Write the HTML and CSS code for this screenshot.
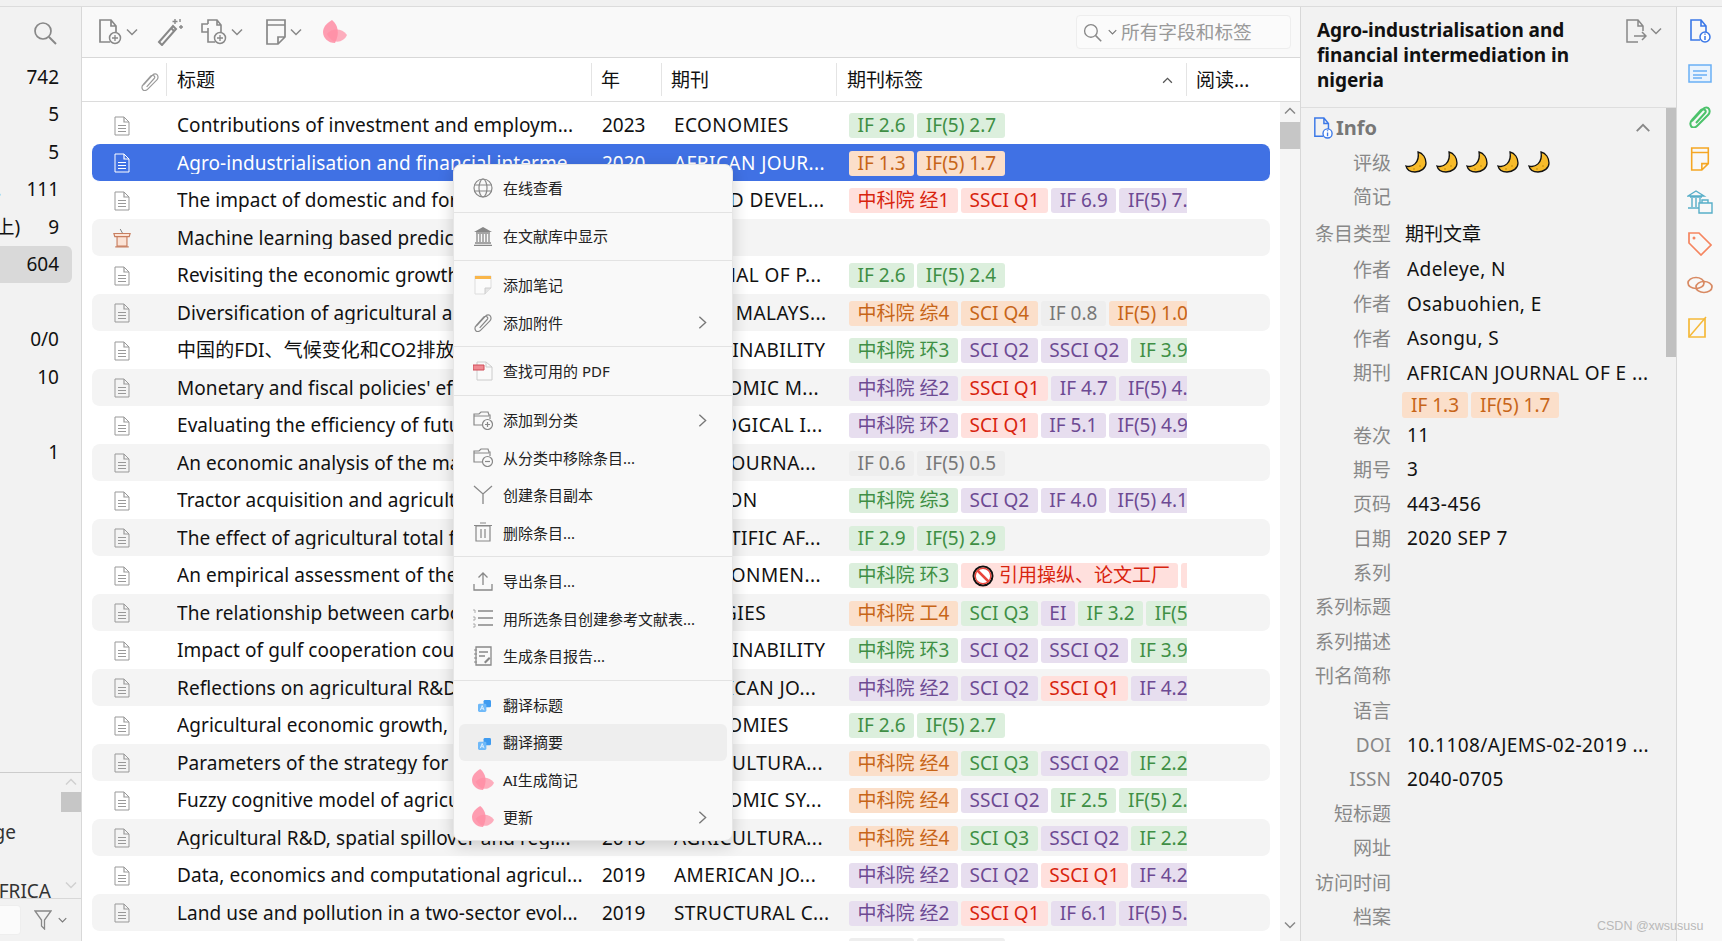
FILE: index.html
```html
<!DOCTYPE html>
<html lang="zh">
<head>
<meta charset="utf-8">
<title>Zotero</title>
<link rel="stylesheet" href="styles.css">
</head>
<body>
<svg class="defs" aria-hidden="true">
  <symbol id="doc" viewBox="0 0 16 20"><path d="M1 1h9l5 5v13H1z" fill="none" stroke="currentColor" stroke-width="1"/><path d="M10 1v5h5M4 9.5h8M4 12.5h8M4 15.5h8" fill="none" stroke="currentColor" stroke-width="1.2"/></symbol>
  <symbol id="podium" viewBox="0 0 20 22"><path d="M1 6h18l-1 3.500H2z" fill="#fbe3d6" stroke="#c87e5f" stroke-width="1.300"/><path d="M4.500 9.500h11V20h-11z" fill="#fbe3d6" stroke="#c87e5f" stroke-width="1.300"/><path d="M2.500 20.800h15" stroke="#c87e5f" stroke-width="1.300"/><path d="M8 1l2.500 4.500" stroke="#777"/></symbol>
  <symbol id="search" viewBox="0 0 24 24"><circle cx="10" cy="10" r="8" fill="none" stroke="currentColor" stroke-width="1.700"/><path d="M16 16l7 7" stroke="currentColor" stroke-width="2"/></symbol>
  <symbol id="chev" viewBox="0 0 12 8"><path d="M1 1.500l5 5 5-5" fill="none" stroke="currentColor" stroke-width="1.500"/></symbol>
  <symbol id="newitem" viewBox="0 0 24 26"><path d="M12 23H2V1h11l5 6v6M13 1v6h5" fill="none" stroke="currentColor" stroke-width="1.700"/><circle cx="17" cy="19" r="5.500" fill="none" stroke="currentColor" stroke-width="1.500"/><path d="M14 19h6M17 16v6" stroke="currentColor" stroke-width="1.300"/></symbol>
  <symbol id="wand" viewBox="0 0 26 28"><path d="M2 24l3 3L19 11l-3-3z" fill="none" stroke="currentColor" stroke-width="2"/><path d="M14 10l3 3" stroke="currentColor" stroke-width="2"/><path d="M18 1v5M15.500 3.500h5M24 7v4M22 9h4M23 1v3" stroke="currentColor" stroke-width="1.400"/></symbol>
  <symbol id="addatt" viewBox="0 0 26 26"><path d="M7 5V1h9l4 5v8M16 1v5h4M7 5H1v8h6M7 9v14h7" fill="none" stroke="currentColor" stroke-width="1.600"/><circle cx="19" cy="19" r="5.500" fill="none" stroke="currentColor" stroke-width="1.500"/><path d="M16 19h6M19 16v6" stroke="currentColor" stroke-width="1.300"/></symbol>
  <symbol id="note" viewBox="0 0 20 26"><path d="M1 1h18v17l-7 7H1zM19 18h-7v7M1 6h18" fill="none" stroke="currentColor" stroke-width="1.700"/></symbol>
  <symbol id="flower" viewBox="0 0 24 24"><path d="M9 0c6 5 8 13 3 23C5 23 0 18 0 12 0 7 4 3 9 0z" fill="#ff8da4" opacity=".85"/><path d="M4 14c5-6 15-6 20 1-3 7-14 11-20-1z" fill="#ff8da4" opacity=".7"/></symbol>
  <symbol id="clip" viewBox="0 0 24 24"><path d="M4 17L15 5c2-2 5-2 6 0s1 4-1 6L9 22c-2 2-5 2-6 0s-1-4 1-6l9-10c1-1 3-1 4 0s1 2 0 3L8 19" fill="none" stroke="currentColor" stroke-width="1.400"/></symbol>
  <symbol id="clipb" viewBox="0 0 24 24"><path d="M4 17L15 5c2-2 5-2 6 0s1 4-1 6L9 22c-2 2-5 2-6 0s-1-4 1-6l9-10c1-1 3-1 4 0s1 2 0 3L8 19" fill="none" stroke="currentColor" stroke-width="2"/></symbol>
  <symbol id="globe" viewBox="0 0 20 20"><circle cx="10" cy="10" r="9" fill="none" stroke="#888" stroke-width="1.200"/><ellipse cx="10" cy="10" rx="4" ry="9" fill="none" stroke="#888" stroke-width="1.200"/><path d="M1 7h18M1 13h18" stroke="#888" stroke-width="1.200"/></symbol>
  <symbol id="bank" viewBox="0 0 20 20"><path d="M1 6l9-5 9 5z" fill="#888"/><path d="M3 7h14M4 8v8M7 8v8M10 8v8M13 8v8M16 8v8M2 17h16M1 19.500h18" stroke="#888" stroke-width="1.300"/></symbol>
  <symbol id="mnote" viewBox="0 0 18 20"><path d="M1 1h16v12l-6 6H1z" fill="#fbfbfb" stroke="#ddd"/><path d="M1 1h16v3H1z" fill="#f9b64a"/><path d="M17 13h-6v6" fill="#e5e5e5" stroke="#ccc"/></symbol>
  <symbol id="mpdf" viewBox="0 0 20 20"><path d="M4 1h9l6 5v13H4z" fill="#fafafa" stroke="#ccc"/><path d="M13 1v5h6" fill="none" stroke="#ccc"/><path d="M0 4h11v5H0z" fill="#f08a92" stroke="#cf4d59"/></symbol>
  <symbol id="coll" viewBox="0 0 20 20"><path d="M10 15H1V4h5l2-2h7l1 3h1v4M1 6h15" fill="none" stroke="#888" stroke-width="1.200"/><circle cx="14.500" cy="14.500" r="5" fill="#f9f9f9" stroke="#888" stroke-width="1.200"/><path d="M12 14.500h5" stroke="#888" stroke-width="1.200"/></symbol>
  <symbol id="collplus" viewBox="0 0 20 20"><path d="M10 15H1V4h5l2-2h7l1 3h1v4M1 6h15" fill="none" stroke="#888" stroke-width="1.200"/><circle cx="14.500" cy="14.500" r="5" fill="#f9f9f9" stroke="#888" stroke-width="1.200"/><path d="M12 14.500h5M14.500 12v5" stroke="#888" stroke-width="1.200"/></symbol>
  <symbol id="dup" viewBox="0 0 20 20"><path d="M1 1l9 8 9-8M10 9v10" fill="none" stroke="#888" stroke-width="1.300"/></symbol>
  <symbol id="trash" viewBox="0 0 20 20"><path d="M3 4h14v15H3zM1 3.500h18M7 1h6M8 7v9M12 7v9" fill="none" stroke="#888" stroke-width="1.200"/></symbol>
  <symbol id="export" viewBox="0 0 20 20"><path d="M1 13v6h18v-6M10 2v12M5.500 6.500L10 2l4.500 4.500" fill="none" stroke="#888" stroke-width="1.300"/></symbol>
  <symbol id="biblio" viewBox="0 0 20 20"><path d="M5 3h15M5 10h15M5 17h15" stroke="#888" stroke-width="1.300"/><path d="M0 2h2v3M0 9h2v3H0M0 16h2v3H0" fill="none" stroke="#999" stroke-width=".8"/></symbol>
  <symbol id="report" viewBox="0 0 20 20"><path d="M3 1h15v18H3zM6 6h9M6 10h6" fill="none" stroke="#888" stroke-width="1.300"/><path d="M1 4h3M1 8h3M1 12h3M1 16h3" stroke="#888"/><path d="M11 16l5-5 1.500 1.500-5 5z" fill="#888"/></symbol>
  <symbol id="trans" viewBox="0 0 14 14"><rect x="6" y="1" width="8" height="8" rx="1.500" fill="#3f9bf0"/><rect x="0" y="5" width="9" height="9" rx="1.500" fill="#6fb9f8"/><path d="M2.500 12l2-5 2 5M3.500 10.500h2" fill="none" stroke="#fff" stroke-width=".8"/></symbol>
  <symbol id="more" viewBox="0 0 10 16"><path d="M1.500 1.500l7 6.500-7 6.500" fill="none" stroke="#777" stroke-width="1.500"/></symbol>
  <symbol id="moon" viewBox="0 0 22 22"><path d="M13 1C18 2 21 7 21 12 21 17 16 21 10 21 6 21 2 19 1 15 7 17 15 12 13 1z" fill="#f7bb2a" stroke="#111" stroke-width="1.300"/><circle cx="15" cy="15" r=".8" fill="#b8860b"/><circle cx="9" cy="18" r=".8" fill="#b8860b"/></symbol>
  <symbol id="ban" viewBox="0 0 22 22"><circle cx="11" cy="11" r="9.500" fill="#fff" stroke="#111" stroke-width="2"/><circle cx="11" cy="11" r="7.800" fill="none" stroke="#e8453c" stroke-width="1.400"/><path d="M5.500 5.500l11 11" stroke="#e8453c" stroke-width="2.500"/></symbol>
  <symbol id="filter" viewBox="0 0 18 20"><path d="M1 1h16l-6.500 9v9l-3-3v-6z" fill="none" stroke="currentColor" stroke-width="1.300"/></symbol>
  <symbol id="docinfo" viewBox="0 0 22 24"><path d="M11 21H2V1h10l5 6v6M12 1v6h5" fill="none" stroke="#3b78e7" stroke-width="1.600"/><circle cx="16" cy="18" r="5" fill="#fff" stroke="#3b78e7" stroke-width="1.500"/><path d="M16 17v4M16 14.500v1.200" stroke="#3b78e7" stroke-width="1.500"/></symbol>
  <symbol id="share" viewBox="0 0 22 24"><path d="M13 23H2V1h11l5 6v5M13 1v6h5M9 17h12M17 13l4 4-4 4" fill="none" stroke="currentColor" stroke-width="1.500"/></symbol>
  <symbol id="abstract" viewBox="0 0 24 20"><path d="M1 1h22v17H1z" fill="#e9f3fd" stroke="#6ab0f5" stroke-width="1.500"/><path d="M5 7h14M5 11h14M5 14h9" stroke="#6ab0f5" stroke-width="1.300"/></symbol>
  <symbol id="library" viewBox="0 0 26 26"><path d="M1 7l8-5 8 5zM3 8h12M5 9v9M9 9v9M13 9v5M1 19h11" fill="none" stroke="#57aec8" stroke-width="1.400"/><path d="M12 14h13v10H12zM15 14v-3h6v3" fill="none" stroke="#57aec8" stroke-width="1.400"/></symbol>
  <symbol id="tag" viewBox="0 0 24 24"><path d="M1 1h10l12 12-10 10L1 11z" fill="none" stroke="#f58560" stroke-width="1.700"/><circle cx="6" cy="6" r="1.500" fill="#f58560"/></symbol>
  <symbol id="link" viewBox="0 0 26 20"><ellipse cx="9" cy="8" rx="8" ry="5.500" fill="none" stroke="#d88a63" stroke-width="1.700"/><ellipse cx="17" cy="12" rx="8" ry="5.500" fill="none" stroke="#d88a63" stroke-width="1.700"/></symbol>
  <symbol id="edit" viewBox="0 0 20 22"><path d="M1 3h16v18H1z" fill="none" stroke="#f5b93a" stroke-width="1.700"/><path d="M1 21L18 1" stroke="#f5b93a" stroke-width="1.500"/></symbol>
</svg>

<div class="topstrip"></div>
<div class="app">
  <aside class="left">
    <div class="left-search"><svg class="i24 grey"><use href="#search"/></svg></div>
    <div class="tree">
      <div class="node"><span>742</span></div>
      <div class="node"><span>5</span></div>
      <div class="node"><span>5</span></div>
      <div class="node"><span class="clipped c1">...</span><span>111</span></div>
      <div class="node"><span class="clipped c2">(5年以上)</span><span>9</span></div>
      <div class="node sel"><span>604</span></div>
      <div class="node"></div>
      <div class="node"><span>0/0</span></div>
      <div class="node"><span>10</span></div>
      <div class="node"></div>
      <div class="node"><span>1</span></div>
    </div>
    <div class="tagbox">
      <div class="taglist">
        <div class="tl tl1">Knowledge</div>
        <div class="tl tl2">AFRICA</div>
      </div>
      <div class="vbar small">
        <svg class="arrow up"><use href="#chev"/></svg>
        <div class="thumb"></div>
        <svg class="arrow"><use href="#chev"/></svg>
      </div>
    </div>
    <div class="leftfoot">
      <div class="tagfilter"></div>
      <svg class="filter"><use href="#filter"/></svg>
      <svg class="chev-s"><use href="#chev"/></svg>
    </div>
  </aside>

  <main class="center">
    <div class="toolbar">
      <svg class="tb tb1"><use href="#newitem"/></svg><svg class="chev"><use href="#chev"/></svg>
      <svg class="tb tb2"><use href="#wand"/></svg>
      <svg class="tb tb3"><use href="#addatt"/></svg><svg class="chev"><use href="#chev"/></svg>
      <svg class="tb tb4"><use href="#note"/></svg><svg class="chev"><use href="#chev"/></svg>
      <svg class="tb tb5"><use href="#flower"/></svg>
      <div class="searchbox">
        <svg class="sb-i"><use href="#search"/></svg><svg class="chev-s"><use href="#chev"/></svg>
        <span>所有字段和标签</span>
      </div>
    </div>
    <div class="thead">
      <div class="th th0"><svg class="hclip"><use href="#clip"/></svg></div>
      <div class="th th1">标题</div>
      <div class="th th2">年</div>
      <div class="th th3">期刊</div>
      <div class="th th4">期刊标签<svg class="sort"><use href="#chev"/></svg></div>
      <div class="th th5">阅读...</div>
    </div>
    <div class="listwrap">
      <div class="list">
        <div class="row"><svg class="ri"><use href="#doc"/></svg><span class="t">Contributions of investment and employm...</span><span>2023</span><span class="j">ECONOMIES</span><div class="tags"><b class="g">IF 2.6</b><b class="g">IF(5) 2.7</b></div></div>
        <div class="row selected"><svg class="ri"><use href="#doc"/></svg><span class="t">Agro-industrialisation and financial interme...</span><span>2020</span><span class="j">AFRICAN JOUR...</span><div class="tags"><b class="o">IF 1.3</b><b class="o">IF(5) 1.7</b></div></div>
        <div class="row"><svg class="ri"><use href="#doc"/></svg><span class="t">The impact of domestic and foreign direct...</span><span>2023</span><span class="j">WORLD DEVEL...</span><div class="tags"><b class="r">中科院 经1</b><b class="r">SSCI Q1</b><b class="p">IF 6.9</b><b class="p">IF(5) 7.2</b></div></div>
        <div class="row"><svg class="ri podium"><use href="#podium"/></svg><span class="t">Machine learning based prediction of agr...</span><span>2022</span><span class="j"></span><div class="tags"></div></div>
        <div class="row"><svg class="ri"><use href="#doc"/></svg><span class="t">Revisiting the economic growth and agric...</span><span>2022</span><span class="j">JOURNAL OF P...</span><div class="tags"><b class="g">IF 2.6</b><b class="g">IF(5) 2.4</b></div></div>
        <div class="row"><svg class="ri"><use href="#doc"/></svg><span class="t">Diversification of agricultural and rural...</span><span>2022</span><span class="j">J AGRI MALAYS...</span><div class="tags"><b class="o">中科院 综4</b><b class="o">SCI Q4</b><b class="n">IF 0.8</b><b class="o">IF(5) 1.0</b></div></div>
        <div class="row"><svg class="ri"><use href="#doc"/></svg><span class="t">中国的FDI、气候变化和CO2排放的关系研究...</span><span>2022</span><span class="j">SUSTAINABILITY</span><div class="tags"><b class="g">中科院 环3</b><b class="p">SCI Q2</b><b class="p">SSCI Q2</b><b class="g">IF 3.9</b></div></div>
        <div class="row"><svg class="ri"><use href="#doc"/></svg><span class="t">Monetary and fiscal policies' effect on agr...</span><span>2022</span><span class="j">ECONOMIC M...</span><div class="tags"><b class="p">中科院 经2</b><b class="r">SSCI Q1</b><b class="p">IF 4.7</b><b class="p">IF(5) 4.5</b></div></div>
        <div class="row"><svg class="ri"><use href="#doc"/></svg><span class="t">Evaluating the efficiency of future agricul...</span><span>2022</span><span class="j">ECOLOGICAL I...</span><div class="tags"><b class="p">中科院 环2</b><b class="r">SCI Q1</b><b class="p">IF 5.1</b><b class="p">IF(5) 4.9</b></div></div>
        <div class="row"><svg class="ri"><use href="#doc"/></svg><span class="t">An economic analysis of the maize farming...</span><span>2022</span><span class="j">AGRI JOURNA...</span><div class="tags"><b class="n">IF 0.6</b><b class="n">IF(5) 0.5</b></div></div>
        <div class="row"><svg class="ri"><use href="#doc"/></svg><span class="t">Tractor acquisition and agricultural output...</span><span>2022</span><span class="j">HELIYON</span><div class="tags"><b class="g">中科院 综3</b><b class="p">SCI Q2</b><b class="p">IF 4.0</b><b class="p">IF(5) 4.1</b></div></div>
        <div class="row"><svg class="ri"><use href="#doc"/></svg><span class="t">The effect of agricultural total factor prod...</span><span>2022</span><span class="j">SCIENTIFIC AF...</span><div class="tags"><b class="g">IF 2.9</b><b class="g">IF(5) 2.9</b></div></div>
        <div class="row"><svg class="ri"><use href="#doc"/></svg><span class="t">An empirical assessment of the nexus bet...</span><span>2022</span><span class="j">ENVIRONMEN...</span><div class="tags"><b class="g">中科院 环3</b><b class="r flagged"><svg class="ban"><use href="#ban"/></svg>引用操纵、论文工厂</b><b class="r">IF</b></div></div>
        <div class="row"><svg class="ri"><use href="#doc"/></svg><span class="t">The relationship between carbon emission...</span><span>2021</span><span class="j">ENERGIES</span><div class="tags"><b class="o">中科院 工4</b><b class="g">SCI Q3</b><b class="p">EI</b><b class="g">IF 3.2</b><b class="g">IF(5) 3.3</b></div></div>
        <div class="row"><svg class="ri"><use href="#doc"/></svg><span class="t">Impact of gulf cooperation council countri...</span><span>2021</span><span class="j">SUSTAINABILITY</span><div class="tags"><b class="g">中科院 环3</b><b class="p">SCI Q2</b><b class="p">SSCI Q2</b><b class="g">IF 3.9</b></div></div>
        <div class="row"><svg class="ri"><use href="#doc"/></svg><span class="t">Reflections on agricultural R&amp;D, productiv...</span><span>2021</span><span class="j">AMERICAN JO...</span><div class="tags"><b class="p">中科院 经2</b><b class="p">SCI Q2</b><b class="r">SSCI Q1</b><b class="p">IF 4.2</b></div></div>
        <div class="row"><svg class="ri"><use href="#doc"/></svg><span class="t">Agricultural economic growth, renewable...</span><span>2021</span><span class="j">ECONOMIES</span><div class="tags"><b class="g">IF 2.6</b><b class="g">IF(5) 2.7</b></div></div>
        <div class="row"><svg class="ri"><use href="#doc"/></svg><span class="t">Parameters of the strategy for raising the...</span><span>2020</span><span class="j">AGRICULTURA...</span><div class="tags"><b class="o">中科院 经4</b><b class="g">SCI Q3</b><b class="p">SSCI Q2</b><b class="g">IF 2.2</b></div></div>
        <div class="row"><svg class="ri"><use href="#doc"/></svg><span class="t">Fuzzy cognitive model of agricultural econ...</span><span>2020</span><span class="j">ECONOMIC SY...</span><div class="tags"><b class="o">中科院 经4</b><b class="p">SSCI Q2</b><b class="g">IF 2.5</b><b class="g">IF(5) 2.6</b></div></div>
        <div class="row"><svg class="ri"><use href="#doc"/></svg><span class="t">Agricultural R&amp;D, spatial spillover and regi...</span><span>2018</span><span class="j">AGRICULTURA...</span><div class="tags"><b class="o">中科院 经4</b><b class="g">SCI Q3</b><b class="p">SSCI Q2</b><b class="g">IF 2.2</b></div></div>
        <div class="row"><svg class="ri"><use href="#doc"/></svg><span class="t">Data, economics and computational agricul...</span><span>2019</span><span class="j">AMERICAN JO...</span><div class="tags"><b class="p">中科院 经2</b><b class="p">SCI Q2</b><b class="r">SSCI Q1</b><b class="p">IF 4.2</b></div></div>
        <div class="row"><svg class="ri"><use href="#doc"/></svg><span class="t">Land use and pollution in a two-sector evol...</span><span>2019</span><span class="j">STRUCTURAL C...</span><div class="tags"><b class="p">中科院 经2</b><b class="r">SSCI Q1</b><b class="p">IF 6.1</b><b class="p">IF(5) 5.8</b></div></div>
        <div class="row"><svg class="ri"><use href="#doc"/></svg><span class="t">Agricultural productivity and economic gr...</span><span>2019</span><span class="j">JOURNAL OF...</span><div class="tags"><b class="n">IF 0.9</b><b class="n">IF(5) 1.0</b></div></div>
      </div>
      <div class="vbar">
        <svg class="arrow up"><use href="#chev"/></svg>
        <div class="thumb"></div>
        <svg class="arrow"><use href="#chev"/></svg>
      </div>
    </div>
  </main>

  <section class="detail">
    <header class="dhead">
      <h1>Agro-industrialisation and financial intermediation in nigeria</h1>
      <svg class="share"><use href="#share"/></svg>
      <svg class="chev"><use href="#chev"/></svg>
    </header>
    <div class="dbody">
      <div class="fields">
        <div class="infohead"><svg class="info-i"><use href="#docinfo"/></svg><span>Info</span><svg class="collapse"><use href="#chev"/></svg></div>
        <div class="field"><label>评级</label><div class="moons"><svg><use href="#moon"/></svg><svg><use href="#moon"/></svg><svg><use href="#moon"/></svg><svg><use href="#moon"/></svg><svg><use href="#moon"/></svg></div></div>
        <div class="field"><label>简记</label></div>
        <div class="field spaced"><label>条目类型</label><span class="v cjk">期刊文章</span></div>
        <div class="field spaced"><label>作者</label><span class="v">Adeleye, N</span></div>
        <div class="field"><label>作者</label><span class="v">Osabuohien, E</span></div>
        <div class="field"><label>作者</label><span class="v">Asongu, S</span></div>
        <div class="field"><label>期刊</label><span class="v">AFRICAN JOURNAL OF E ...</span></div>
        <div class="dtags"><b class="o">IF 1.3</b><b class="o">IF(5) 1.7</b></div>
        <div class="field"><label>卷次</label><span class="v">11</span></div>
        <div class="field"><label>期号</label><span class="v">3</span></div>
        <div class="field"><label>页码</label><span class="v">443-456</span></div>
        <div class="field"><label>日期</label><span class="v">2020 SEP 7</span></div>
        <div class="field"><label>系列</label></div>
        <div class="field"><label>系列标题</label></div>
        <div class="field"><label>系列描述</label></div>
        <div class="field"><label>刊名简称</label></div>
        <div class="field"><label>语言</label></div>
        <div class="field"><label>DOI</label><span class="v">10.1108/AJEMS-02-2019 ...</span></div>
        <div class="field"><label>ISSN</label><span class="v">2040-0705</span></div>
        <div class="field"><label>短标题</label></div>
        <div class="field"><label>网址</label></div>
        <div class="field"><label>访问时间</label></div>
        <div class="field"><label>档案</label></div>
      </div>
      <div class="dscroll"></div>
    </div>
  </section>

  <nav class="rail">
    <svg class="r1"><use href="#docinfo"/></svg>
    <svg class="r2"><use href="#abstract"/></svg>
    <svg class="r3"><use href="#clipb"/></svg>
    <svg class="r4"><use href="#note"/></svg>
    <svg class="r5"><use href="#library"/></svg>
    <svg class="r6"><use href="#tag"/></svg>
    <svg class="r7"><use href="#link"/></svg>
    <svg class="r8"><use href="#edit"/></svg>
  </nav>
</div>

<div class="menu">
  <div class="mi"><svg><use href="#globe"/></svg>在线查看</div>
  <div class="sep"></div>
  <div class="mi"><svg><use href="#bank"/></svg>在文献库中显示</div>
  <div class="sep"></div>
  <div class="mi"><svg><use href="#mnote"/></svg>添加笔记</div>
  <div class="mi"><svg class="mclip"><use href="#clip"/></svg>添加附件<svg class="sub"><use href="#more"/></svg></div>
  <div class="sep"></div>
  <div class="mi"><svg><use href="#mpdf"/></svg>查找可用的 PDF</div>
  <div class="sep"></div>
  <div class="mi"><svg><use href="#collplus"/></svg>添加到分类<svg class="sub"><use href="#more"/></svg></div>
  <div class="mi"><svg><use href="#coll"/></svg>从分类中移除条目...</div>
  <div class="mi"><svg><use href="#dup"/></svg>创建条目副本</div>
  <div class="mi"><svg><use href="#trash"/></svg>删除条目...</div>
  <div class="sep"></div>
  <div class="mi"><svg><use href="#export"/></svg>导出条目...</div>
  <div class="mi"><svg><use href="#biblio"/></svg>用所选条目创建参考文献表...</div>
  <div class="mi"><svg><use href="#report"/></svg>生成条目报告...</div>
  <div class="sep"></div>
  <div class="mi"><svg class="mtrans"><use href="#trans"/></svg>翻译标题</div>
  <div class="mi hover"><svg class="mtrans"><use href="#trans"/></svg>翻译摘要</div>
  <div class="mi"><svg class="mflower"><use href="#flower"/></svg>AI生成简记</div>
  <div class="mi"><svg class="mflower"><use href="#flower"/></svg>更新<svg class="sub"><use href="#more"/></svg></div>
</div>
<div class="watermark">CSDN @xwsususu</div>
</body>
</html>
```

FILE: styles.css
```css
* { box-sizing: border-box; }
html, body { margin: 0; height: 100%; overflow: hidden; }
body {
  position: relative;
  width: 1722px;
  height: 941px;
  background: #fff;
  color: #111;
  font: 19px/1.2 "Noto Sans", "Noto Sans CJK SC", sans-serif;
}
.defs { position: absolute; width: 0; height: 0; }
b { font-weight: 400; }

.topstrip { height: 7px; background: #f1f1f1; border-bottom: 1px solid #dcdcdc; }
.app { display: flex; height: 934px; }

/* left pane */
.left { width: 82px; flex: none; display: flex; flex-direction: column; background: #f2f2f2; border-right: 1px solid #d8d8d8; overflow: hidden; }
.left-search { height: 51px; display: flex; align-items: center; padding: 0 0 0 33px; flex: none; }
.i24 { width: 24px; height: 24px; }
.grey { color: #888; }
.tree { flex: 1; }
.node { height: 37.5px; width: 72px; padding: 1px 13px 0 0; display: flex; justify-content: flex-end; align-items: center; white-space: nowrap; border-radius: 0 6px 6px 0; }
.node.sel { background: #d9d9d9; }
.clipped { flex: none; }
.c1 { margin-right: 25px; }
.c2 { margin-right: 28px; }
.tagbox { height: 126px; flex: none; display: flex; border-top: 1px solid #ccc; }
.taglist { width: 61px; height: 125px; overflow: hidden; display: flex; flex-direction: column; align-items: flex-end; flex: none; padding-top: 48px; color: #333; }
.tl { white-space: nowrap; height: 26px; }
.tl1 { margin-right: 45px; }
.tl2 { margin-top: 36px; margin-right: 10px; }
.vbar { width: 20px; flex: none; display: flex; flex-direction: column; align-items: center; background: #f5f5f5; padding-top: 5px; }
.vbar .arrow { width: 12px; height: 8px; color: #888; flex: none; }
.vbar .arrow.up { transform: rotate(180deg); }
.vbar .thumb { width: 20px; height: 27px; background: #c6c6c6; margin: 7px 0 772px; flex: none; }
.vbar.small { background: #f2f2f2; }
.vbar.small .arrow { color: #d0d0d0; }
.vbar.small .thumb { height: 20px; margin: 6px 0 69px; }
.leftfoot { height: 43px; flex: none; display: flex; align-items: center; padding-bottom: 1px; border-top: 1px solid #d8d8d8; }
.tagfilter { width: 21px; height: 30px; background: #fbfbfb; border: 1px solid #eee; border-left: 0; border-radius: 0 4px 4px 0; }
.filter { width: 18px; height: 20px; color: #888; margin-left: 13px; }
.chev-s { width: 9px; height: 6px; color: #777; }
.leftfoot .chev-s { margin-left: 6px; }

/* center */
.center { width: 1219px; flex: none; display: flex; flex-direction: column; border-right: 1px solid #d8d8d8; overflow: hidden; }
.toolbar { height: 51px; flex: none; background: #f9f9f9; border-bottom: 1px solid #d8d8d8; display: flex; align-items: center; color: #888; position: relative; }
.tb { flex: none; }
.tb1 { width: 24px; height: 26px; margin-left: 16px; }
.chev { width: 12px; height: 8px; color: #888; flex: none; margin-left: 4px; }
.tb2 { width: 26px; height: 28px; margin-left: 19px; }
.tb3 { width: 26px; height: 26px; margin-left: 18px; }
.tb4 { width: 20px; height: 26px; margin-left: 23px; }
.tb5 { width: 24px; height: 24px; margin-left: 21px; }
.searchbox { margin-left: auto; margin-right: 9px; width: 215px; height: 34px; background: #fbfbfb; border: 1px solid #eee; border-radius: 4px; display: flex; align-items: center; padding-left: 6px; color: #999; font-size: 18.700px; white-space: nowrap; }
.sb-i { width: 19px; height: 19px; color: #888; flex: none; }
.searchbox .chev-s { margin: 0 4px 0 6px; flex: none; }

.thead { height: 44px; flex: none; display: flex; border-bottom: 1px solid #dcdcdc; align-items: center; background: #fff; white-space: nowrap; }
.th { height: 33px; display: flex; align-items: center; padding: 2px 0 0 9px; border-right: 1px solid #e4e4e4; flex: none; }
.th0 { width: 85px; justify-content: flex-end; padding-right: 6px; }
.hclip { width: 20px; height: 20px; color: #999; }
.th1 { width: 425px; padding-left: 10px; }
.th2 { width: 70px; }
.th3 { width: 175px; }
.th4 { width: 350px; padding-left: 10px; justify-content: space-between; padding-right: 13px; }
.sort { width: 11px; height: 7px; transform: rotate(180deg); color: #555; }
.th5 { border-right: 0; padding-left: 9px; }

.listwrap { flex: 1; display: flex; min-height: 0; overflow: hidden; }
.list { flex: 1; padding: 4.5px 10px 0; overflow: hidden; }
.row { height: 37.5px; width: 1178px; padding-top: 1.500px; display: grid; grid-template-columns: 85px 425px 72px 175px 338px; align-items: center; white-space: nowrap; border-radius: 8px; border-bottom: .5px solid #fff; overflow: hidden; }
.row:nth-child(even) { background: #f4f4f4; }
.row.selected { background: #4071e4; color: #fff; }
.ri { width: 16px; height: 20px; margin-left: 22px; color: #999; }
.row.selected .ri { color: #fff; }
.ri.podium { width: 18px; height: 20px; margin-left: 21px; }
.t { overflow: hidden; letter-spacing: .07px; }
.j { overflow: hidden; letter-spacing: .42px; }
.tags { display: flex; gap: 3px; overflow: hidden; align-items: center; }
.tags b, .dtags b { flex: none; height: 25px; line-height: 25px; padding: 0 8.600px; border-radius: 3px; }
.g { background: #dcefdd; color: #3f8f45; }
.o { background: #fbdfca; color: #c76518; }
.r { background: #ffe0dd; color: #d8240e; }
.p { background: #e7deef; color: #6d4a93; }
.n { background: #eeeeee; color: #777; }
.tags b.flagged { display: flex; align-items: center; width: 217px; padding-left: 11px; gap: 5px; }
.ban { width: 22px; height: 22px; flex: none; }

/* detail */
.detail { width: 376px; flex: none; display: flex; flex-direction: column; background: #f2f2f2; border-right: 1px solid #d8d8d8; overflow: hidden; }
.dhead { height: 101px; flex: none; border-bottom: 1px solid #dedede; display: flex; align-items: flex-start; padding: 11px 0 0 16px; position: relative; }
.dhead h1 { margin: 0; width: 306px; font-size: 19px; line-height: 25px; font-weight: 700; letter-spacing: -.03px; }
.share { width: 22px; height: 24px; color: #888; margin: 1px 0 0 2px; flex: none; }
.dhead .chev { margin: 9px 0 0 3px; }
.dbody { flex: 1; display: flex; min-height: 0; overflow: hidden; }
.fields { width: 365px; flex: none; }
.infohead { height: 38px; display: flex; align-items: center; padding: 2px 0 0 12px; color: #777; font-weight: 700; font-size: 20px; }
.info-i { width: 20px; height: 22px; flex: none; margin-right: 3px; }
.collapse { width: 16px; height: 10px; color: #888; transform: rotate(180deg); margin-left: auto; margin-right: 15px; }
.field { height: 34.4px; display: flex; align-items: center; white-space: nowrap; }
.field.spaced { margin-top: 2px; }
.field label { width: 90px; text-align: right; color: #888; flex: none; }
.v { margin-left: 16px; padding-bottom: 1px; letter-spacing: .42px; }
.v.cjk { margin-left: 14px; letter-spacing: 0; padding-bottom: 0; }
.moons { display: flex; gap: 8.700px; margin: 0 0 2px 14px; }
.moons svg { width: 22px; height: 22px; }
.dtags { height: 28px; display: flex; gap: 3px; padding-left: 101px; align-items: center; }
.dtags b { height: 26px; line-height: 26px; padding: 0 9px; }
.dscroll { width: 10px; height: 249px; background: #c0c0c0; flex: none; }

/* rail */
.rail { flex: 1; background: #f8f8f8; display: flex; flex-direction: column; align-items: center; padding-top: 12px; }
.rail svg { flex: none; }
.r1 { width: 22px; height: 24px; }
.r2 { width: 24px; height: 20px; margin-top: 21px; }
.r3 { width: 24px; height: 24px; margin-top: 20px; color: #4cc26b; }
.r4 { width: 20px; height: 24px; margin-top: 19px; color: #f5a623; }
.r5 { width: 26px; height: 26px; margin-top: 18px; }
.r6 { width: 24px; height: 24px; margin-top: 17px; }
.r7 { width: 26px; height: 20px; margin-top: 19px; }
.r8 { width: 20px; height: 22px; margin: 21px 4px 0 0; }

/* context menu */
.menu { position: absolute; left: 453px; top: 164px; width: 280px; height: 677px; padding-top: 4px; background: #f9f9f9; border: 1px solid #e6e6e6; border-radius: 8px; box-shadow: 0 4px 16px rgba(0,0,0,.18); font-size: 15px; color: #222; white-space: nowrap; }
.mi { height: 37.5px; display: flex; align-items: center; padding-left: 49px; position: relative; }
.mi > svg:first-child { position: absolute; left: 19px; top: 8.500px; width: 20px; height: 20px; color: #888; }
.mi > svg.mtrans { left: 24px; top: 13px; width: 13px; height: 13px; }
.mi > svg.mflower { left: 18px; top: 7.500px; width: 22px; height: 22px; }
.mi.hover { background: #eeeeee; border-radius: 6px; margin: 0 5px; padding-left: 44px; }
.mi.hover > svg.mtrans { left: 19px; }
.sub { width: 9px; height: 15px; margin-left: auto; margin-right: 25px; }
.sep { height: 1px; margin: 5.100px 0; background: #e3e3e3; }

.watermark { position: absolute; left: 1597px; top: 917px; font: 12.500px/18px "Liberation Sans", sans-serif; color: #b9b9b9; white-space: nowrap; }
```
